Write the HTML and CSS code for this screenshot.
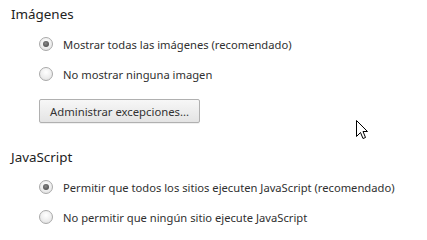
FILE: index.html
```html
<!DOCTYPE html>
<html lang="es">
<head>
<meta charset="utf-8">
<link rel="stylesheet" href="styles.css">
</head>
<body>
<div class="page">
  <section class="group">
    <h2 class="heading">Imágenes</h2>
    <div class="options">
      <label class="option"><span class="radio checked"></span><span class="label">Mostrar todas las imágenes (recomendado)</span></label>
      <label class="option"><span class="radio"></span><span class="label">No mostrar ninguna imagen</span></label>
      <button class="btn">Administrar excepciones...</button>
    </div>
  </section>
  <section class="group js">
    <h2 class="heading">JavaScript</h2>
    <div class="options">
      <label class="option"><span class="radio checked"></span><span class="label">Permitir que todos los sitios ejecuten JavaScript (recomendado)</span></label>
      <label class="option"><span class="radio"></span><span class="label">No permitir que ningún sitio ejecute JavaScript</span></label>
    </div>
  </section>
  <svg class="cursor" width="12" height="20" viewBox="0 0 12 20">
    <path d="M0.5 0.5 L0.5 16.5 L4.5 12.5 L7 18.5 L9.5 17.5 L7 11.5 L11.5 11.5 Z" fill="#fff" stroke="#000" stroke-width="1" stroke-linejoin="miter"/>
  </svg>
</div>
</body>
</html>
```
FILE: styles.css
```css
html, body {
  margin: 0;
  padding: 0;
  background: #fff;
}
.page {
  position: relative;
  width: 427px;
  height: 225px;
  overflow: hidden;
  padding-left: 11px;
  box-sizing: border-box;
  font-family: "Noto Sans", "Open Sans", sans-serif;
  color: #303030;
}
.group {
  display: flex;
  flex-direction: column;
}
.heading {
  margin: 4px 0 0 0;
  height: 20px;
  line-height: 20px;
  font-size: 13.4px;
  font-weight: normal;
  color: #222;
}
.js .heading {
  margin-top: 24px;
}
.options {
  display: flex;
  flex-direction: column;
  align-items: flex-start;
  padding-left: 28px;
  margin-top: 5px;
}
.option {
  display: flex;
  align-items: center;
  height: 30px;
  gap: 10px;
  font-size: 11.2px;
}
.radio {
  width: 14px;
  height: 14px;
  border-radius: 50%;
  box-sizing: border-box;
  border: 1px solid #a9a9a9;
  background: radial-gradient(circle at 50% 35%, #ffffff 0%, #ececec 60%, #d8d8d8 100%);
  display: flex;
  align-items: center;
  justify-content: center;
}
.radio.checked::after {
  content: "";
  width: 6px;
  height: 6px;
  border-radius: 50%;
  background: radial-gradient(circle at 45% 40%, #8a8a8a 0%, #3c3c3c 100%);
}
.btn {
  margin-top: 10px;
  height: 24px;
  padding: 0 10px;
  font-family: inherit;
  font-size: 11.3px;
  color: #333;
  border: 1px solid #b0b0b0;
  border-radius: 2px;
  background: linear-gradient(#f7f7f7, #e4e4e4);
  box-shadow: 0 1px 0 rgba(0,0,0,0.06);
}
.cursor {
  position: absolute;
  left: 356px;
  top: 120px;
}
```
